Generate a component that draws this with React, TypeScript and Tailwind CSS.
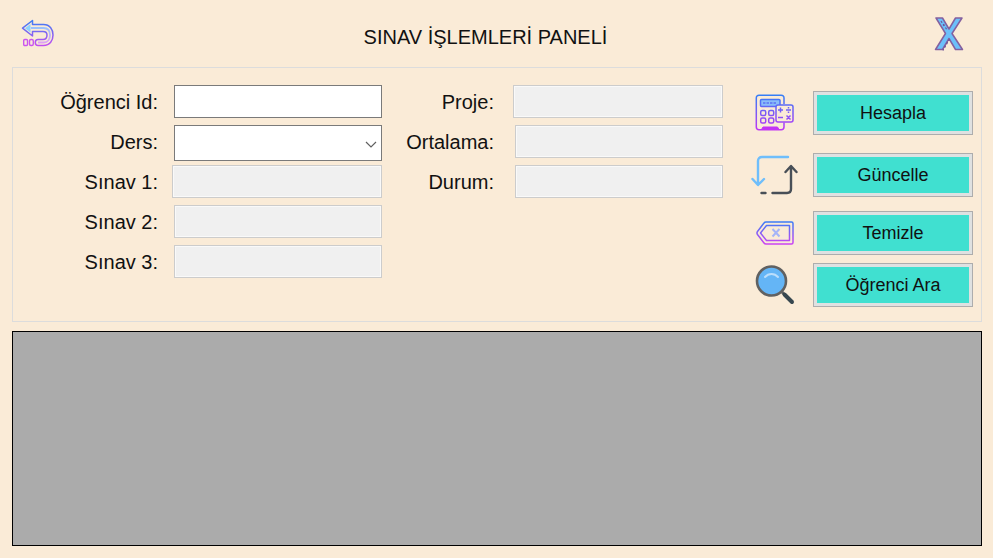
import type { ReactNode } from 'react';

function BackIcon() {
  return (
    <svg width="34" height="30" viewBox="0 0 34 30" fill="none" aria-hidden="true">
      <defs>
        <linearGradient id="back" x1="0" y1="2" x2="0" y2="28" gradientUnits="userSpaceOnUse">
          <stop stopColor="#3f7cf3" />
          <stop offset="1" stopColor="#c94cf0" />
        </linearGradient>
        <linearGradient id="backInner" x1="0" y1="6" x2="0" y2="24" gradientUnits="userSpaceOnUse">
          <stop stopColor="#8cc8ff" />
          <stop offset="1" stopColor="#e0a0f5" />
        </linearGradient>
      </defs>
      <path
        d="M11.500 1.500V5.500H22.500C29 5.500 32 10.500 32 16S29 26.500 22.500 26.500H17C15 26.500 14.300 25 14.300 23.500S15 20.500 17 20.500H22C25 20.500 26 18.500 26 16S25 12.500 22 12.500H11.500V17L1.500 9.200Z"
        stroke="url(#back)"
        strokeWidth="1.500"
        strokeLinejoin="round"
      />
      <path d="M10 9H22.500C27 9 29 12 29 16S27 23.500 22.500 23.500H17" stroke="url(#backInner)" strokeWidth="1.800" />
      <path d="M9.500 5V13.500L4 9.200Z" fill="#8cd2ff" />
      <rect x="2.700" y="20.500" width="3.800" height="6" rx="1" stroke="#cb55ef" strokeWidth="1.400" />
      <rect x="8.500" y="20.500" width="3.800" height="6" rx="1.500" stroke="#cb55ef" strokeWidth="1.400" />
    </svg>
  );
}

function CloseIcon() {
  return (
    <svg width="30" height="34" viewBox="0 0 30 34" fill="none" aria-hidden="true">
      <path
        d="M2 1H8.500L15 12L21.500 1H28L18 16.500L28.500 32.500H21.500L15 21.500L8.500 32.500H1.500L11.500 16.500Z"
        fill="#6cc0fa"
        stroke="#84609f"
        strokeWidth="1.500"
        strokeLinejoin="round"
      />
      <path d="M7 4L10 9M9.500 7L13 13M15.500 22L9 33.500M13.500 25L9 33" stroke="#6f5596" strokeWidth="1.200" strokeDasharray="2 2" />
    </svg>
  );
}

function CalculatorIcon() {
  return (
    <svg width="40" height="38" viewBox="0 0 40 38" fill="none" aria-hidden="true">
      <defs>
        <linearGradient id="calc" x1="0" y1="1" x2="0" y2="37" gradientUnits="userSpaceOnUse">
          <stop stopColor="#347ff6" />
          <stop offset="1" stopColor="#c334f5" />
        </linearGradient>
      </defs>
      <g stroke="url(#calc)" strokeWidth="1.500">
        <path d="M29 10V4C29 2.300 28 1.300 26.300 1.300H4C2.300 1.300 1.300 2.300 1.300 4V33C1.300 34.700 2.300 35.700 4 35.700H26.300C28 35.700 29 34.700 29 33V28.500" />
        <rect x="5.500" y="5.500" width="19.500" height="7" rx="1" fill="#8abdf9" />
        <path d="M8 9H22" strokeDasharray="2.500 1" stroke="#5c72f5" />
        <rect x="5.700" y="16.500" width="5" height="5" rx="1.500" />
        <rect x="13.700" y="16.500" width="5" height="5" rx="1.500" />
        <rect x="5.700" y="24" width="5" height="5" rx="1.500" />
        <rect x="13.700" y="24" width="5" height="5" rx="1.500" />
        <rect x="21" y="11" width="17" height="17" rx="2" fill="#faebd7" />
        <path d="M23 16H28M25.500 13.500V18.500M31 16H36M33.500 13V14.500M33.500 17.500V19M23 23.500H28M31.500 21.500L35.500 25.500M35.500 21.500L31.500 25.500" />
      </g>
      <path d="M6.500 35.500L8 33H22.500L24 35.500Z" fill="#c334f5" stroke="#c334f5" />
    </svg>
  );
}

function UpdateIcon() {
  return (
    <svg width="48" height="42" viewBox="0 0 48 42" fill="none" strokeWidth="2.400" strokeLinecap="round" strokeLinejoin="round" aria-hidden="true">
      <path d="M37 3H11C8.500 3 7 4.500 7 7V30M1.500 25L7 31L13 25" stroke="#6fbefb" />
      <path d="M10.500 39H14.500M21.500 39H36C38.500 39 40 37.500 40 35V13M34.500 18L40 12L45.500 18" stroke="#484f57" />
    </svg>
  );
}

function ClearIcon() {
  return (
    <svg width="38" height="24" viewBox="0 0 38 24" fill="none" aria-hidden="true">
      <defs>
        <linearGradient id="clear" x1="0" y1="1" x2="0" y2="23" gradientUnits="userSpaceOnUse">
          <stop stopColor="#3d7cf6" />
          <stop offset="1" stopColor="#cc43f3" />
        </linearGradient>
      </defs>
      <g stroke="url(#clear)" strokeWidth="1.500" strokeLinejoin="round">
        <path d="M10 1H35.500C36.500 1 37 1.500 37 2.500V21.500C37 22.500 36.500 23 35.500 23H10C9 23 8.500 22.700 8 22L1.500 13.500C.8 12.500 .8 11.500 1.500 10.500L8 2C8.500 1.300 9 1 10 1Z" />
        <path d="M10.500 4.500H33.500V19.500H10.500L4.500 12Z" />
      </g>
      <path d="M16.500 8L23.500 15.500M23.500 8L16.500 15.500" stroke="#a5b4f8" strokeWidth="2" />
    </svg>
  );
}

function SearchIcon() {
  return (
    <svg width="40" height="40" viewBox="0 0 40 40" fill="none" aria-hidden="true">
      <path d="M26 26L30 30" stroke="#616161" strokeWidth="3" />
      <path d="M29.500 29.500L37 37" stroke="#37474f" strokeWidth="4" strokeLinecap="round" />
      <circle cx="16.500" cy="16" r="14.500" fill="#64b5f6" stroke="#616161" strokeWidth="2.600" />
      <path d="M10 12C13.500 8 19.500 8 23 12" stroke="#bbdefb" strokeWidth="2" strokeLinecap="round" />
    </svg>
  );
}

const disabledBox =
  'h-[33px] min-w-0 self-start border border-[#cccccc] bg-[#f0f0f0] px-1 shadow-[inset_0_0_0_1px_#f9f9f9]';
const activeBox = 'min-w-0 border border-[#7a7a7a] bg-white px-1';

function Row({ id, label, second, children }: { id: string; label: string; second?: boolean; children: ReactNode }) {
  return (
    <div className={second ? 'flex h-10 gap-[19px]' : 'flex h-10 gap-[14px]'}>
      <label htmlFor={id} className={second ? 'w-28 shrink-0 text-right leading-[34px]' : 'w-[145px] shrink-0 text-right leading-[34px]'}>
        {label}
      </label>
      <div className="flex min-w-0 flex-1 items-start justify-end">{children}</div>
    </div>
  );
}

function Action({ icon, text }: { icon: ReactNode; text: string }) {
  return (
    <div className="flex items-center gap-[14px]">
      <div className="flex h-11 w-12 shrink-0 items-center justify-center">{icon}</div>
      <button
        type="button"
        className="h-11 w-40 shrink-0 border border-[#adadad] bg-[#40e0d0] text-[18px] leading-6 shadow-[inset_0_0_0_3px_#dfe1e1]"
      >
        {text}
      </button>
    </div>
  );
}

export default function App() {
  return (
    <main className="flex min-h-screen flex-col bg-[#faebd7] pr-[11px] pb-3 pl-3 font-['Liberation_Sans',Arial,sans-serif] text-[20px] text-[#111111]">
      <header className="flex h-[67px] items-center justify-between pr-[18px] pl-[9px]">
        <button type="button" aria-label="Geri">
          <BackIcon />
        </button>
        <h1 className="pt-1.5 pr-[18px]">SINAV İŞLEMLERİ PANELİ</h1>
        <button type="button" aria-label="Kapat">
          <CloseIcon />
        </button>
      </header>

      <form className="flex h-[255px] border border-[#dcdcdc] pr-2">
        <div className="min-w-0 flex-[369_1_0%] pt-[17px]">
          <Row id="ogrenci" label="Öğrenci Id:">
            <input id="ogrenci" type="text" className={`${activeBox} ml-0.5 h-[33px] flex-1`} />
          </Row>
          <Row id="ders" label="Ders:">
            <div className="relative ml-0.5 flex min-w-0 flex-1">
              <select id="ders" className={`${activeBox} h-9 flex-1 appearance-none`} />
              <svg className="pointer-events-none absolute top-4 right-[5px]" width="12" height="8" viewBox="0 0 12 8" fill="none" aria-hidden="true">
                <path d="M1 1L6 6L11 1" stroke="#606060" strokeWidth="1.200" />
              </svg>
            </div>
          </Row>
          <Row id="sinav1" label="Sınav 1:">
            <input id="sinav1" type="text" disabled className={`${disabledBox} flex-1`} />
          </Row>
          <Row id="sinav2" label="Sınav 2:">
            <input id="sinav2" type="text" disabled className={`${disabledBox} ml-0.5 flex-1`} />
          </Row>
          <Row id="sinav3" label="Sınav 3:">
            <input id="sinav3" type="text" disabled className={`${disabledBox} ml-0.5 flex-1`} />
          </Row>
        </div>

        <div className="min-w-0 flex-[341_1_0%] pt-[17px]">
          <Row id="proje" label="Proje:" second>
            <input id="proje" type="text" disabled className={`${disabledBox} flex-1`} />
          </Row>
          <Row id="ortalama" label="Ortalama:" second>
            <input id="ortalama" type="text" disabled className={`${disabledBox} ml-0.5 flex-1`} />
          </Row>
          <Row id="durum" label="Durum:" second>
            <input id="durum" type="text" disabled className={`${disabledBox} ml-0.5 flex-1`} />
          </Row>
        </div>

        <div className="ml-7 flex shrink-0 flex-col pt-[23px]">
          <Action icon={<CalculatorIcon />} text="Hesapla" />
          <div className="mt-[18px]">
            <Action icon={<UpdateIcon />} text="Güncelle" />
          </div>
          <div className="mt-3.5">
            <Action icon={<ClearIcon />} text="Temizle" />
          </div>
          <div className="mt-2">
            <Action icon={<SearchIcon />} text="Öğrenci Ara" />
          </div>
        </div>
      </form>

      <section aria-label="Sınav listesi" className="mt-[9px] flex-1 border border-black bg-[#ababab]" />
    </main>
  );
}
